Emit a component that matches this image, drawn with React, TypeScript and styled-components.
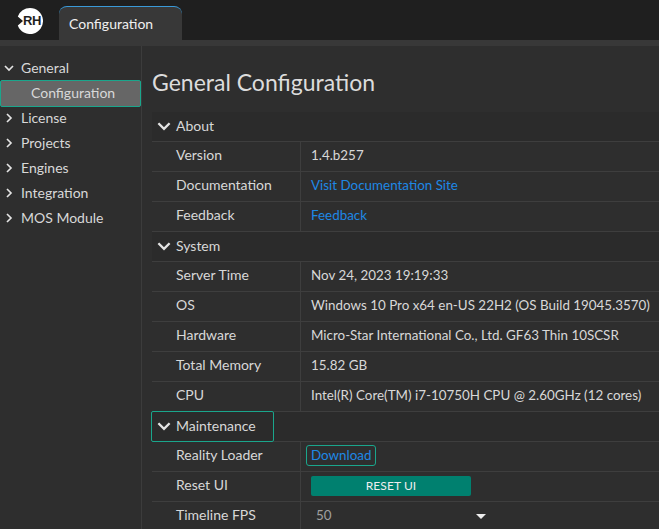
import styled, { createGlobalStyle } from 'styled-components';

const GlobalStyle = createGlobalStyle`
    html, body {
        margin: 0;
        padding: 0;
        background: #2e2e2e;
        overflow: hidden;
    }
`;

const Chevron = ({ open, size = 12 }: { open?: boolean; size?: number }) => (
    <svg width={size} height={size} viewBox="0 0 12 12" fill="none">
        <path
            d={open ? 'M1.2 3.6 6 8.4l4.8-4.8' : 'M3.6 1.2 8.4 6l-4.8 4.8'}
            stroke="#e4e4e4"
            strokeWidth="2"
        />
    </svg>
);

const sideItems = ['License', 'Projects', 'Engines', 'Integration', 'MOS Module'];

export default function App() {
    return (
        <Page>
            <GlobalStyle />
            <TopBar>
                <Logo>
                    <svg width="26" height="26" viewBox="0 0 26 26">
                        <path
                            d="M13 0a13 13 0 1 1-12.2 17.5L6 13 0.8 8.5A13 13 0 0 1 13 0z"
                            fill="#fff"
                        />
                    </svg>
                    <LogoText>RH</LogoText>
                </Logo>
                <Tab>Configuration</Tab>
            </TopBar>
            <Band />
            <Body>
                <Sidebar>
                    <SideItem>
                        <Chevron open size={10} />
                        General
                    </SideItem>
                    <SideChild>Configuration</SideChild>
                    {sideItems.map((item) => (
                        <SideItem key={item}>
                            <Chevron size={10} />
                            {item}
                        </SideItem>
                    ))}
                </Sidebar>
                <Main>
                    <Title>General Configuration</Title>
                    <Section>
                        <SectionHead>
                            <Chevron open size={14} />
                            About
                        </SectionHead>
                    </Section>
                    <Row>
                        <Label>Version</Label>
                        <Value>1.4.b257</Value>
                    </Row>
                    <Row>
                        <Label>Documentation</Label>
                        <Value>
                            <Anchor>Visit Documentation Site</Anchor>
                        </Value>
                    </Row>
                    <Row>
                        <Label>Feedback</Label>
                        <Value>
                            <Anchor>Feedback</Anchor>
                        </Value>
                    </Row>
                    <Section>
                        <SectionHead>
                            <Chevron open size={14} />
                            System
                        </SectionHead>
                    </Section>
                    <Row>
                        <Label>Server Time</Label>
                        <Value>Nov 24, 2023 19:19:33</Value>
                    </Row>
                    <Row>
                        <Label>OS</Label>
                        <Value>Windows 10 Pro x64 en-US 22H2 (OS Build 19045.3570)</Value>
                    </Row>
                    <Row>
                        <Label>Hardware</Label>
                        <Value>Micro-Star International Co., Ltd. GF63 Thin 10SCSR</Value>
                    </Row>
                    <Row>
                        <Label>Total Memory</Label>
                        <Value>15.82 GB</Value>
                    </Row>
                    <Row>
                        <Label>CPU</Label>
                        <Value>Intel(R) Core(TM) i7-10750H CPU @ 2.60GHz (12 cores)</Value>
                    </Row>
                    <Section>
                        <SectionHead $focused>
                            <Chevron open size={14} />
                            Maintenance
                        </SectionHead>
                    </Section>
                    <Row>
                        <Label>Reality Loader</Label>
                        <Value>
                            <DownloadLink>Download</DownloadLink>
                        </Value>
                    </Row>
                    <Row>
                        <Label>Reset UI</Label>
                        <Value>
                            <ResetButton>RESET UI</ResetButton>
                        </Value>
                    </Row>
                    <Row>
                        <Label>Timeline FPS</Label>
                        <SelectValue>
                            50
                            <Caret />
                        </SelectValue>
                    </Row>
                </Main>
            </Body>
        </Page>
    );
}

const Page = styled.div`
    width: 659px;
    height: 529px;
    overflow: hidden;
    display: flex;
    flex-direction: column;
    background: #2e2e2e;
    color: #d8d8d8;
    font-family: Lato, 'Noto Sans', sans-serif;
    font-size: 14px;
`;

const TopBar = styled.div`
    height: 40px;
    flex: none;
    display: flex;
    align-items: flex-end;
    background: #1f1f1f;
    padding-left: 59px;
    position: relative;
`;

const Logo = styled.div`
    position: absolute;
    left: 17px;
    top: 8px;
    width: 26px;
    height: 26px;
`;

const LogoText = styled.span`
    position: absolute;
    left: 6px;
    top: 6px;
    font-size: 13px;
    line-height: 14px;
    font-weight: 700;
    color: #1f1f1f;
    font-family: 'Liberation Sans', sans-serif;
    letter-spacing: -0.3px;
`;

const Tab = styled.div`
    width: 123px;
    height: 34px;
    box-sizing: border-box;
    padding-left: 10px;
    display: flex;
    align-items: center;
    background: #383838;
    border-top: 1px solid #3a9ad9;
    border-radius: 8px 8px 0 0;
    color: #f0f0f0;
`;

const Band = styled.div`
    height: 6px;
    flex: none;
    background: #383838;
`;

const Body = styled.div`
    flex: 1;
    display: flex;
    min-height: 0;
`;

const Sidebar = styled.nav`
    width: 142px;
    flex: none;
    box-sizing: border-box;
    padding-top: 9px;
    border-right: 1px solid #3c3c3c;
`;

const SideItem = styled.div`
    height: 25px;
    display: flex;
    align-items: center;
    gap: 7px;
    padding-left: 4px;
    font-size: 14px;
`;

const SideChild = styled.div`
    width: 141px;
    height: 27px;
    margin-bottom: -2px;
    box-sizing: border-box;
    padding-left: 30px;
    padding-bottom: 2px;
    display: flex;
    align-items: center;
    background: #666;
    border: 1px solid #1aa68c;
    border-radius: 2px;
    font-size: 14px;
`;

const Main = styled.main`
    flex: 1;
    min-width: 0;
    padding-left: 10px;
`;

const Title = styled.h1`
    margin: 0;
    height: 66px;
    box-sizing: border-box;
    padding-top: 20px;
    font-size: 23px;
    line-height: 32px;
    font-weight: 400;
    color: #dcdcdc;
`;

const Section = styled.div`
    height: 30px;
    box-sizing: border-box;
    display: flex;
    align-items: flex-start;
    border-bottom: 1px solid #3e3e3e;
    background: #2b2b2b;
`;

const SectionHead = styled.div<{ $focused?: boolean }>`
    width: 123px;
    height: 31px;
    margin: -1px 0 0 -1px;
    box-sizing: border-box;
    display: flex;
    align-items: center;
    gap: 5px;
    padding: 0 0 2px 5px;
    border: 1px solid ${(p) => (p.$focused ? '#1aa68c' : 'transparent')};
    border-radius: 2px;
    font-size: 14px;
`;

const Row = styled.div`
    height: 30px;
    box-sizing: border-box;
    display: flex;
    border-bottom: 1px solid #3e3e3e;
`;

const Label = styled.div`
    width: 149px;
    flex: none;
    box-sizing: border-box;
    padding: 0 0 4px 24px;
    display: flex;
    align-items: center;
    border-right: 1px solid #3e3e3e;
    font-size: 14px;
    white-space: nowrap;
`;

const Value = styled.div`
    flex: 1;
    padding: 0 0 4px 10px;
    display: flex;
    align-items: center;
    white-space: nowrap;
    font-size: 13.4px;
`;

const Anchor = styled.span`
    color: #1e88e5;
`;

const DownloadLink = styled.span`
    margin: 2px 0 0 -5px;
    padding: 0 4px;
    height: 21px;
    line-height: 19px;
    box-sizing: border-box;
    border: 1px solid #1aa68c;
    border-radius: 3px;
    color: #1e88e5;
`;

const ResetButton = styled.button`
    width: 160px;
    height: 20px;
    margin-top: 2px;
    padding: 0;
    border: none;
    border-radius: 2px;
    background: #00806f;
    color: #eee;
    font-family: inherit;
    font-size: 12px;
    letter-spacing: 0.1px;
`;

const SelectValue = styled(Value)`
    color: #a0a0a0;
    position: relative;
    padding-left: 15px;
`;

const Caret = styled.span`
    position: absolute;
    left: 175px;
    top: 12px;
    border-left: 5px solid transparent;
    border-right: 5px solid transparent;
    border-top: 5px solid #eee;
`;
